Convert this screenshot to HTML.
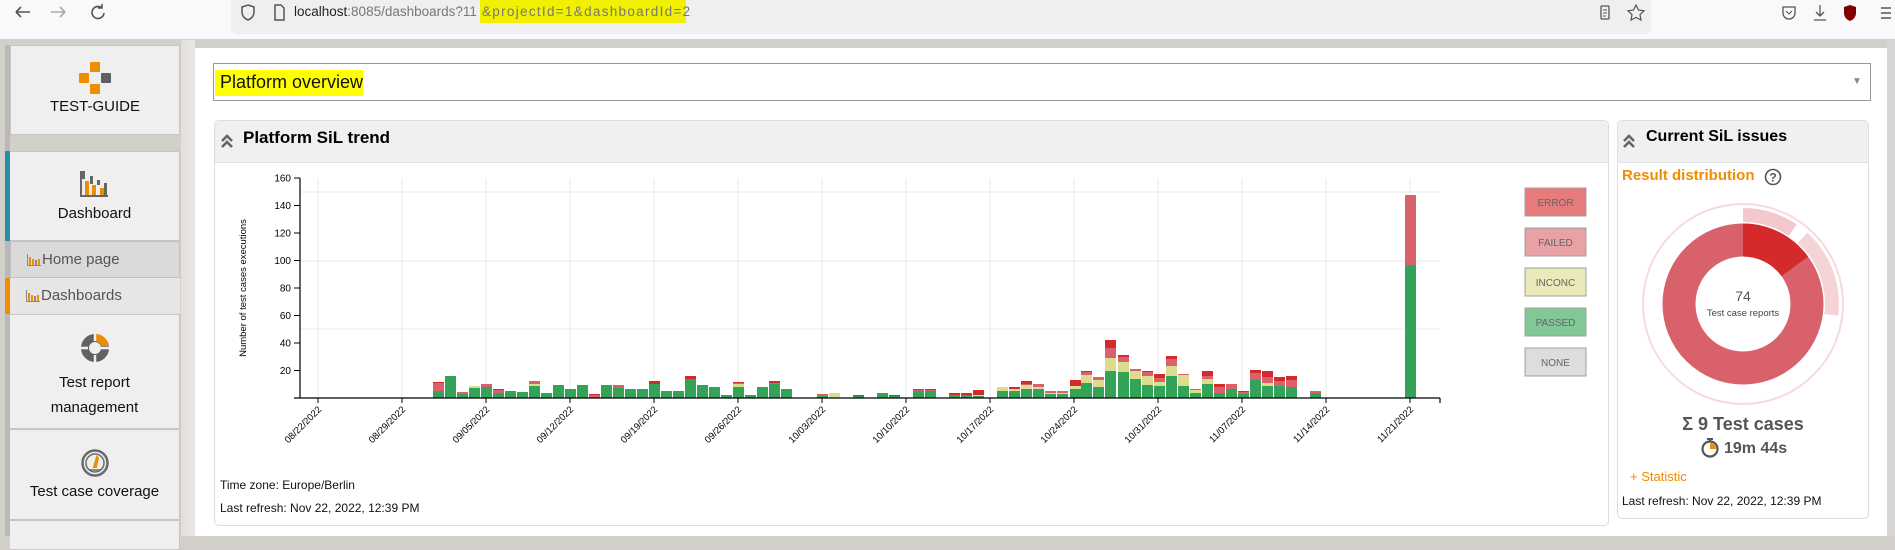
<!DOCTYPE html>
<html><head><meta charset="utf-8"><style>
*{margin:0;padding:0;box-sizing:border-box}
body{width:1895px;height:536px;overflow:hidden;position:relative;font-family:"Liberation Sans",sans-serif;background:#d3cfcb}
.a{position:absolute}
.bar{left:0;top:0;width:1895px;height:40px;background:#f9f9fb;border-bottom:1px solid #d0d0d4}
.url{left:231px;top:0;width:1420px;height:34px;background:#efeff2;border-radius:0 0 6px 6px}
.si{left:10px;width:170px;background:#efefef;border:1px solid #c6c6c6;text-align:center;font-size:15px;color:#111}
.sub{left:10px;width:170px;font-size:15px;color:#555;padding-left:31px;line-height:36px}
.ic{position:absolute;left:16px;top:12px;width:14px;height:12px}
</style></head><body>
<div class="a bar"></div>
<svg class="a" style="left:0;top:0" width="120" height="36"><g stroke="#555" stroke-width="1.6" fill="none"><path d="M16 12h14M16 12l5-5M16 12l5 5"/><path d="M51 12h14M65 12l-5-5M65 12l-5 5" stroke="#aaa"/><path d="M102 8a6 6 0 1 0 2 5M102 4v4h-4"/></g></svg>
<div class="a url"></div>
<svg class="a" style="left:238px;top:1px" width="50" height="24"><path d="M10 4l6 2v5c0 4-3 7-6 8-3-1-6-4-6-8V6z" fill="none" stroke="#555" stroke-width="1.5"/><path d="M37 4h6l3 3v12h-9z" fill="none" stroke="#555" stroke-width="1.5"/></svg>
<div class="a" style="left:480px;top:0;width:206px;height:23px;background:#f0f000"></div>
<div class="a" style="left:294px;top:4px;font-size:13.5px;color:#222;white-space:nowrap">localhost<span style="color:#777">:8085/dashboards?11</span></div>
<div class="a" style="left:482px;top:4px;font-size:13.5px;color:#777;white-space:nowrap;letter-spacing:1.3px">&amp;projectId=1&amp;dashboardId=2</div>
<svg class="a" style="left:1596px;top:2px" width="60" height="24"><rect x="5" y="4" width="8" height="13" rx="1" fill="none" stroke="#555" stroke-width="1.3"/><path d="M7 8h4M7 11h4M7 14h3" stroke="#555"/><path d="M40 3l2.5 5 5.5.8-4 3.8 1 5.4-5-2.6-5 2.6 1-5.4-4-3.8 5.5-.8z" fill="none" stroke="#555" stroke-width="1.2"/></svg>
<svg class="a" style="left:1778px;top:2px" width="117" height="24"><path d="M5 5h12v6a6 6 0 0 1-12 0z" fill="none" stroke="#555" stroke-width="1.3"/><path d="M8 9l3 3 3-3" fill="none" stroke="#555"/><path d="M42 3v11M38 10l4 4 4-4M36 18h12" fill="none" stroke="#555" stroke-width="1.3"/><path d="M72 3l6 2v6c0 4-3 7-6 8-3-1-6-4-6-8V5z" fill="#800000"/><path d="M103 6h10M103 11h10M103 16h10" stroke="#555" stroke-width="1.4"/></svg>

<!-- sidebar -->
<div class="a" style="left:0;top:40px;width:181px;height:496px;background:#d3cfcb"></div>
<div class="a" style="left:181px;top:40px;width:14px;height:496px;background:linear-gradient(90deg,#e3dfdc,#e9e7e5)"></div>
<div class="a" style="left:5px;top:45px;width:5px;height:491px;background:#b9b9b9"></div>
<div class="a si" style="top:45px;height:90px"><div style="margin-top:52px">TEST-GUIDE</div></div>
<div class="a" style="left:90px;top:62px;width:10px;height:10px;background:#ef8d00;border-radius:1px"></div>
<div class="a" style="left:79px;top:73px;width:10px;height:10px;background:#ef8d00;border-radius:1px"></div>
<div class="a" style="left:101px;top:73px;width:10px;height:10px;background:#5f6063;border-radius:1px"></div>
<div class="a" style="left:90px;top:84px;width:10px;height:10px;background:#ef8d00;border-radius:1px"></div>
<div class="a" style="left:5px;top:151px;width:5px;height:90px;background:#2190a3"></div>
<div class="a si" style="top:151px;height:90px;border-left:none"><div style="margin-top:53px">Dashboard</div></div>
<svg class="a" style="left:80px;top:170px" width="30" height="28"><path d="M1 1v25h27" fill="none" stroke="#666" stroke-width="2"/><rect x="2" y="1" width="3" height="8" fill="#666"/><rect x="5" y="11" width="4" height="14" fill="#ef8d00"/><rect x="10" y="6" width="3" height="8" fill="#666"/><rect x="12" y="15" width="4" height="10" fill="#ef8d00"/><rect x="17" y="10" width="3" height="5" fill="#666"/><rect x="20" y="18" width="4" height="7" fill="#ef8d00"/><rect x="24" y="13" width="3" height="12" fill="#666"/></svg>
<div class="a sub" style="top:241px;height:37px;background:#dadada;border:1px solid #c0c0c0">Home page<svg class="ic" viewBox="0 0 14 12"><path d="M.5 0v11.5H14" fill="none" stroke="#888"/><rect x="2" y="3" width="2" height="8" fill="#ef8d00"/><rect x="5" y="5" width="2" height="6" fill="#ef8d00"/><rect x="8" y="6" width="2" height="5" fill="#888"/><rect x="11" y="5" width="2" height="6" fill="#ef8d00"/></svg></div>
<div class="a" style="left:5px;top:278px;width:5px;height:36px;background:#ef8d00"></div>
<div class="a sub" style="top:278px;height:36px;background:#e8e6e4">Dashboards<svg class="ic" viewBox="0 0 14 12"><path d="M.5 0v11.5H14" fill="none" stroke="#888"/><rect x="2" y="3" width="2" height="8" fill="#ef8d00"/><rect x="5" y="5" width="2" height="6" fill="#ef8d00"/><rect x="8" y="6" width="2" height="5" fill="#888"/><rect x="11" y="5" width="2" height="6" fill="#ef8d00"/></svg></div>
<div class="a si" style="top:314px;height:115px;border-left:none;line-height:25px"><div style="margin-top:55px">Test report<br>management</div></div>
<svg class="a" style="left:80px;top:333px" width="30" height="30"><circle cx="15" cy="15" r="10" fill="none" stroke="#606266" stroke-width="8"/><path d="M15 1a14 14 0 0 1 14 12h-8a6 6 0 0 0-6-5z" fill="#ef8d00"/><path d="M15 1v7M21 15h8M15 22v8M1 15h7" stroke="#efefef" stroke-width="2.5"/></svg>
<div class="a si" style="top:429px;height:91px;border-left:none"><div style="margin-top:53px">Test case coverage</div></div>
<svg class="a" style="left:80px;top:448px" width="30" height="30"><circle cx="15" cy="15" r="12.5" fill="none" stroke="#6a6a6a" stroke-width="2.5"/><circle cx="15" cy="15" r="9" fill="none" stroke="#6a6a6a" stroke-width="1.5"/><path d="M14 19l3-10 1 1-2 9z" fill="#ef8d00" stroke="#ef8d00" stroke-width="2"/><path d="M9 22h12" stroke="#6a6a6a" stroke-width="1.5"/></svg>
<div class="a si" style="top:520px;height:30px;border-left:none"></div>

<!-- main -->
<div class="a" style="left:195px;top:47px;width:1692px;height:489px;background:#fff;border-top:1px solid #ccc"></div>
<div class="a" style="left:1887px;top:40px;width:8px;height:496px;background:#d8d6d4"></div>
<div class="a" style="left:213px;top:63px;width:1658px;height:38px;border:1px solid #999;background:#fff"></div>
<div class="a" style="left:215px;top:70px;width:148px;height:26px;background:#ffff00"></div>
<div class="a" style="left:220px;top:72px;font-size:18px;color:#111">Platform overview</div>
<div class="a" style="left:1852px;top:76px;font-size:10px;color:#888">▼</div>

<div class="a" style="left:214px;top:120px;width:1395px;height:406px;border:1px solid #ddd;border-radius:5px"></div>
<div class="a" style="left:215px;top:121px;width:1393px;height:42px;background:#f0f0f0;border-bottom:1px solid #e2e2e2;border-radius:5px 5px 0 0"></div>
<div class="a" style="left:243px;top:128px;font-size:17px;font-weight:bold;color:#000">Platform SiL trend</div>
<svg class="a" style="left:220px;top:133px" width="14" height="16"><path d="M2 8l5-5 5 5M2 14l5-5 5 5" fill="none" stroke="#666" stroke-width="2.6"/></svg>
<div class="a" style="left:220px;top:478px;font-size:12px;color:#111">Time zone: Europe/Berlin</div>
<div class="a" style="left:220px;top:501px;font-size:12px;color:#111">Last refresh: Nov 22, 2022, 12:39 PM</div>

<div class="a" style="left:1617px;top:120px;width:252px;height:399px;border:1px solid #ddd;border-radius:5px"></div>
<div class="a" style="left:1618px;top:121px;width:250px;height:42px;background:#f0f0f0;border-bottom:1px solid #e2e2e2;border-radius:5px 5px 0 0"></div>
<div class="a" style="left:1646px;top:128px;font-size:16px;font-weight:bold;color:#000">Current SiL issues</div>
<svg class="a" style="left:1622px;top:133px" width="14" height="16"><path d="M2 8l5-5 5 5M2 14l5-5 5 5" fill="none" stroke="#666" stroke-width="2.6"/></svg>
<div class="a" style="left:1622px;top:167px;font-size:15px;font-weight:bold;color:#ef8d00">Result distribution</div>
<svg class="a" style="left:1764px;top:168px" width="18" height="18"><circle cx="9" cy="9" r="7.5" fill="none" stroke="#555" stroke-width="1.6"/><text x="9" y="13.5" font-size="12" font-weight="bold" text-anchor="middle" fill="#555" font-family="Liberation Sans">?</text></svg>
<div class="a" style="left:1617px;top:414px;width:252px;text-align:center;font-size:18px;font-weight:bold;color:#555">Σ 9 Test cases</div>
<svg class="a" style="left:1700px;top:437px" width="20" height="22"><circle cx="10" cy="12" r="7.5" fill="#fff" stroke="#555" stroke-width="2.2"/><path d="M10 12V6a6 6 0 0 1 6 6z" fill="#ef8d00"/><path d="M7 2h6M10 2v3" stroke="#555" stroke-width="2"/></svg>
<div class="a" style="left:1724px;top:440px;font-size:16px;font-weight:bold;color:#555">19m 44s</div>
<div class="a" style="left:1630px;top:469px;font-size:13px;color:#ef8d00">+ Statistic</div>
<div class="a" style="left:1622px;top:494px;font-size:12px;color:#111">Last refresh: Nov 22, 2022, 12:39 PM</div>

<svg class="a" style="left:0;top:0" width="1895" height="536" id="ch">
<g font-family="Liberation Sans" font-size="10" fill="#000">
<g stroke="#e8e8e8"><path d="M300 192H1440M300 261H1440M300 329H1440"/></g>
<g id="vg" stroke="#e8e8e8"></g>
<g id="bars"></g>
<path d="M300 178v220M294 398H1440M1440 398v5" stroke="#000" stroke-width="1.2" fill="none"/>
<g id="yt"></g><g id="xt"></g>
<text transform="translate(246,288) rotate(-90)" text-anchor="middle" font-size="9.5">Number of test cases executions</text>
</g>
<g font-family="Liberation Sans" font-size="10" fill="#666" text-anchor="middle">
<rect x="1525" y="188" width="61" height="28" fill="#e57b7b" stroke="#a0a0a0"/><text x="1555.5" y="206">ERROR</text>
<rect x="1525" y="228" width="61" height="28" fill="#e8a1a5" stroke="#a0a0a0"/><text x="1555.5" y="246">FAILED</text>
<rect x="1525" y="268" width="61" height="28" fill="#e9e9b9" stroke="#a0a0a0"/><text x="1555.5" y="286">INCONC</text>
<rect x="1525" y="308" width="61" height="28" fill="#82c796" stroke="#a0a0a0"/><text x="1555.5" y="326">PASSED</text>
<rect x="1525" y="348" width="61" height="28" fill="#dddddd" stroke="#a0a0a0"/><text x="1555.5" y="366">NONE</text>
</g>
<g transform="translate(1743,304)">
<circle r="100" fill="none" stroke="#f6dadc" stroke-width="2"/>
<circle r="64" fill="none" stroke="#d9616b" stroke-width="33"/>
<path id="redarc" fill="#d42a2c"/>
<path id="o1" fill="#f4c9cd"/><path id="o2" fill="#f4d4d7"/>
<text y="-3" text-anchor="middle" font-family="Liberation Sans" font-size="14" fill="#555">74</text>
<text y="12" text-anchor="middle" font-family="Liberation Sans" font-size="9.5" fill="#444">Test case reports</text>
</g>
</svg>
<script>
var NS="http://www.w3.org/2000/svg";
function el(p,t,a){var e=document.createElementNS(NS,t);for(var k in a)e.setAttribute(k,a[k]);p.appendChild(e);return e}
var yt=document.getElementById('yt');
for(var v=20;v<=160;v+=20){var y=398-v*1.375;el(yt,'path',{d:'M294 '+y+'h6',stroke:'#000'});var t=el(yt,'text',{x:291,y:y+3.5,'text-anchor':'end'});t.textContent=v}
var labels=['08/22/2022','08/29/2022','09/05/2022','09/12/2022','09/19/2022','09/26/2022','10/03/2022','10/10/2022','10/17/2022','10/24/2022','10/31/2022','11/07/2022','11/14/2022','11/21/2022'];
var xt=document.getElementById('xt'),vg=document.getElementById('vg');
labels.forEach(function(l,i){var x=318+i*84.0;el(vg,'path',{d:'M'+x+' 178V398'});el(xt,'path',{d:'M'+x+' 398v5',stroke:'#000'});var t=el(xt,'text',{transform:'translate('+(x+4)+',410) rotate(-45)','text-anchor':'end','font-size':'9.5'});t.textContent=l});
var C=['#33a457','#dcdc8f','#d9616b','#d42a2c'];
var z5=[[0,7,0,8,1],[1,22],[2,4,0,2],[3,10,2],[4,11,0,3],[5,5,0,3,1],[6,7],[7,6],[8,12,2,3],[9,5],[10,13],[11,9],[12,13],[13,1,0,2,1],[14,13],[15,10,0,3],[16,9],[17,9],[18,14,0,0,3],[19,7],[20,7],[21,19,0,0,3],[22,13],[23,11],[24,3],[25,11,3,1,1],[26,3],[27,11],[28,14,0,1,2],[29,9],[32,2,0,2],[33,0,5],[35,2,0,0,1],[37,5],[38,2,0,0,1]];
var z6=[[913,7,0,1,1],[925,7,0,1,1],[949,3,0,0,2],[961,3,0,0,2],[973,2,1,0,5],[997,7,4],[1009,7,2,0,2],[1021,9,4,1,3],[1033,9,2,3],[1045,4,1,2],[1057,4,1,2],[1070,9,3,0,6],[1081,15,8,3,1],[1093,11,7,3],[1105,27,13,10,8],[1118,26,10,5,2],[1130,19,8,2],[1142,13,9,4,1],[1154,12,4,4,4],[1166,22,10,7,3],[1178,12,11,1],[1190,5,3,1],[1202,14,5,3,5],[1214,5,0,6,3],[1226,9,0,5],[1238,4,0,2,1],[1250,18,0,7,3],[1262,12,3,6,6],[1274,12,0,5,4],[1286,11,0,7,4],[1310,5,0,2],[1405,133,0,70]];
var B=document.getElementById('bars');
function bar(x,h){var y=398;for(var i=0;i<4;i++){var v=h[i]||0;if(v>0){y-=v;el(B,'rect',{x:x,y:y,width:11,height:v,fill:C[i]});}}}
z5.forEach(function(b){bar(433+12*b[0],b.slice(1))});
z6.forEach(function(b){bar(b[0],b.slice(1))});
function arc(r1,r2,a1,a2){function p(r,a){a=a*Math.PI/180;return (r*Math.sin(a)).toFixed(2)+' '+(-r*Math.cos(a)).toFixed(2)}var lg=(a2-a1)>180?1:0;return 'M'+p(r2,a1)+'A'+r2+' '+r2+' 0 '+lg+' 1 '+p(r2,a2)+'L'+p(r1,a2)+'A'+r1+' '+r1+' 0 '+lg+' 0 '+p(r1,a1)+'Z'}
document.getElementById('redarc').setAttribute('d',arc(47.5,80.5,0,54));
document.getElementById('o1').setAttribute('d',arc(82,96,0,34));
document.getElementById('o2').setAttribute('d',arc(82,96,42,97));
</script>
</body></html>
